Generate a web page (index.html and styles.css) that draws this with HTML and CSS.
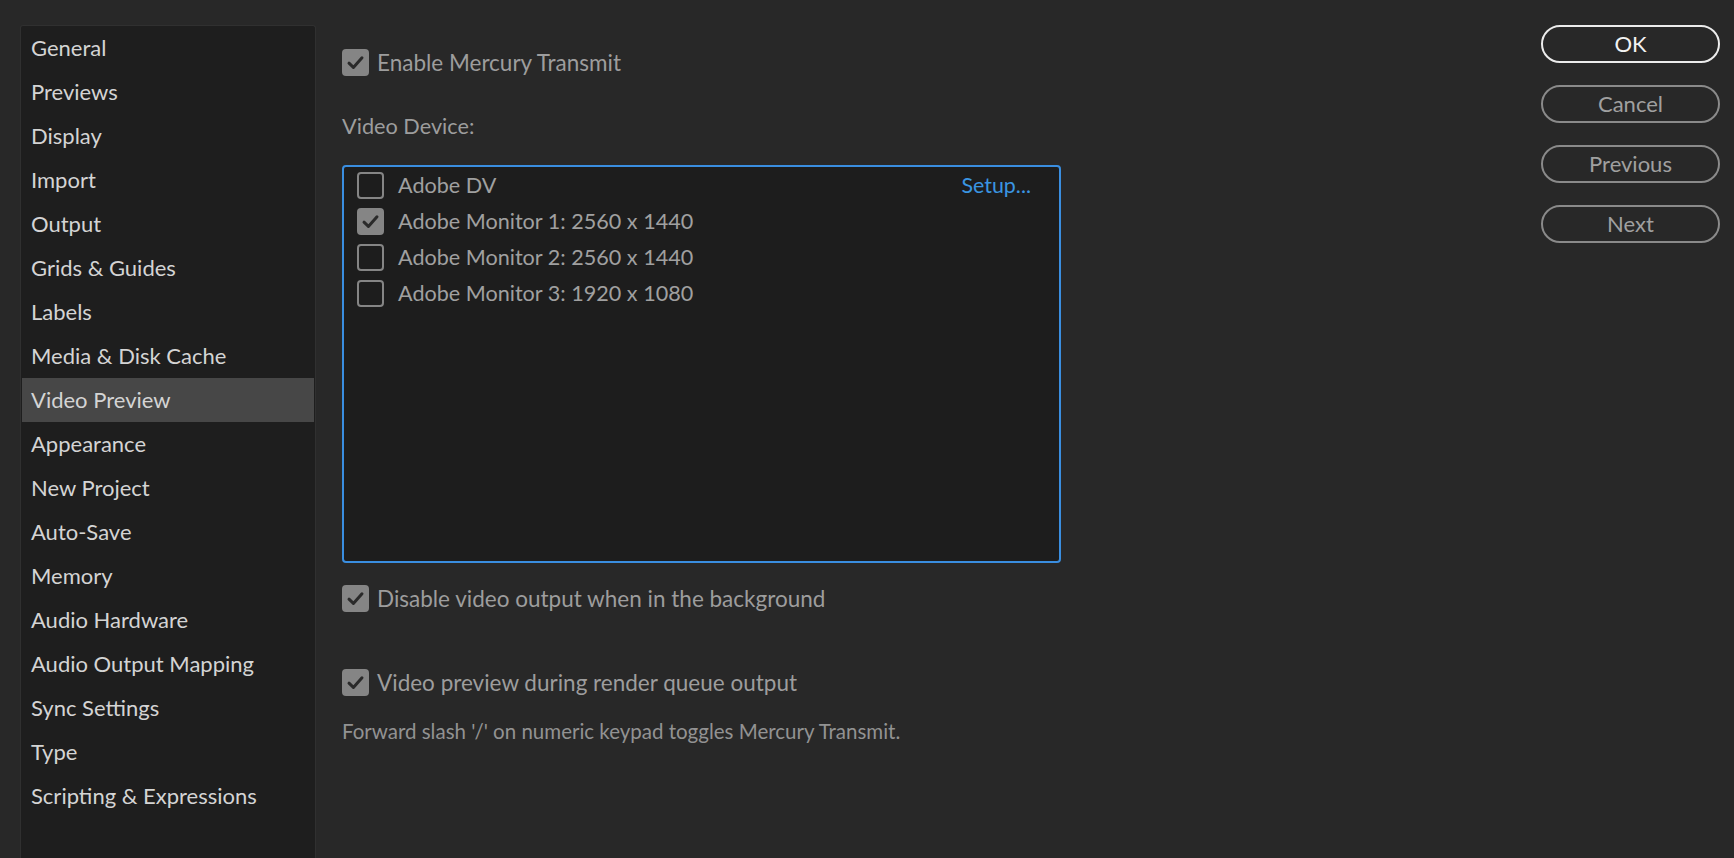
FILE: index.html
```html
<!DOCTYPE html>
<html>
<head>
<meta charset="utf-8">
<link rel="stylesheet" href="styles.css">
</head>
<body>
<div class="dialog">
  <nav class="sidebar">
    <ul class="nav-list">
      <li class="nav-item">General</li>
      <li class="nav-item">Previews</li>
      <li class="nav-item">Display</li>
      <li class="nav-item">Import</li>
      <li class="nav-item">Output</li>
      <li class="nav-item">Grids &amp; Guides</li>
      <li class="nav-item">Labels</li>
      <li class="nav-item">Media &amp; Disk Cache</li>
      <li class="nav-item selected">Video Preview</li>
      <li class="nav-item">Appearance</li>
      <li class="nav-item">New Project</li>
      <li class="nav-item">Auto-Save</li>
      <li class="nav-item">Memory</li>
      <li class="nav-item">Audio Hardware</li>
      <li class="nav-item">Audio Output Mapping</li>
      <li class="nav-item">Sync Settings</li>
      <li class="nav-item">Type</li>
      <li class="nav-item">Scripting &amp; Expressions</li>
    </ul>
  </nav>

  <main class="content">
    <label class="check-row first">
      <span class="box checked"><svg viewBox="0 0 27 27"><path d="M7 14.2 L11.4 18.4 L20 8.8"/></svg></span>
      <span class="check-label">Enable Mercury Transmit</span>
    </label>

    <div class="section-label">Video Device:</div>

    <div class="device-list">
      <div class="device-row">
        <span class="box"></span>
        <span class="device-name">Adobe DV</span>
        <span class="setup">Setup...</span>
      </div>
      <div class="device-row">
        <span class="box checked"><svg viewBox="0 0 27 27"><path d="M7 14.2 L11.4 18.4 L20 8.8"/></svg></span>
        <span class="device-name">Adobe Monitor 1: 2560 x 1440</span>
      </div>
      <div class="device-row">
        <span class="box"></span>
        <span class="device-name">Adobe Monitor 2: 2560 x 1440</span>
      </div>
      <div class="device-row">
        <span class="box"></span>
        <span class="device-name">Adobe Monitor 3: 1920 x 1080</span>
      </div>
    </div>

    <label class="check-row disable-row">
      <span class="box checked"><svg viewBox="0 0 27 27"><path d="M7 14.2 L11.4 18.4 L20 8.8"/></svg></span>
      <span class="check-label">Disable video output when in the background</span>
    </label>

    <label class="check-row render-row">
      <span class="box checked"><svg viewBox="0 0 27 27"><path d="M7 14.2 L11.4 18.4 L20 8.8"/></svg></span>
      <span class="check-label">Video preview during render queue output</span>
    </label>

    <p class="note">Forward slash '/' on numeric keypad toggles Mercury Transmit.</p>
  </main>

  <aside class="buttons">
    <button class="btn primary">OK</button>
    <button class="btn">Cancel</button>
    <button class="btn">Previous</button>
    <button class="btn">Next</button>
  </aside>
</div>
</body>
</html>
```

FILE: styles.css
```css
* { box-sizing: border-box; }

html, body {
  margin: 0;
  padding: 0;
  height: 100%;
  background: #282828;
  overflow: hidden;
}

body {
  font-family: "Lato", "Open Sans", sans-serif;
}

.dialog {
  display: flex;
  height: 858px;
  padding: 25px 14px 0 20px;
}

.sidebar {
  width: 296px;
  flex: none;
  background: #1e1e1e;
  border: 1px solid #303030;
  border-bottom: none;
  border-radius: 3px 3px 0 0;
  padding: 0 1px;
}

.nav-list {
  list-style: none;
  margin: 0;
  padding: 0;
}

.nav-item {
  height: 44px;
  line-height: 44px;
  padding-left: 9px;
  font-size: 22px;
  color: #d4d4d4;
  white-space: nowrap;
}

.nav-item.selected {
  background: #474747;
}

.content {
  flex: 1;
  padding-left: 26px;
  display: flex;
  flex-direction: column;
  align-items: flex-start;
}

.check-row {
  display: flex;
  align-items: center;
  height: 28px;
  gap: 8px;
}

.check-row.first { margin-top: 23px; }
.check-row.disable-row { margin-top: 21px; }
.check-row.render-row { margin-top: 56px; }

.check-label {
  font-size: 22.5px;
  color: #9d9d9d;
  white-space: nowrap;
}

.box {
  width: 27px;
  height: 27px;
  flex: none;
  border: 2.5px solid #858585;
  border-radius: 4px;
  display: inline-flex;
  align-items: center;
  justify-content: center;
}

.box.checked {
  background: #858585;
  border: none;
}

.box svg {
  width: 27px;
  height: 27px;
  display: block;
}

.box svg path {
  fill: none;
  stroke: #2a2a2a;
  stroke-width: 3;
  stroke-linecap: round;
  stroke-linejoin: round;
}

.section-label {
  margin-top: 35px;
  height: 30px;
  line-height: 30px;
  font-size: 21.7px;
  color: #9d9d9d;
}

.device-list {
  margin-top: 24px;
  width: 719px;
  height: 398px;
  background: #1d1d1d;
  border: 2px solid #3a8ee0;
  border-radius: 4px;
  padding: 0 28px 0 13px;
}

.device-row {
  display: flex;
  align-items: center;
  height: 36px;
  gap: 14px;
}

.device-name {
  font-size: 21.6px;
  color: #a0a0a0;
  white-space: nowrap;
}

.setup {
  margin-left: auto;
  font-size: 21.4px;
  color: #3a95e2;
}

.note {
  margin: 21px 0 0;
  font-size: 20.5px;
  color: #929292;
  line-height: 28px;
}

.buttons {
  width: 179px;
  flex: none;
  display: flex;
  flex-direction: column;
  gap: 22px;
  margin-left: auto;
}

.btn {
  height: 38px;
  width: 179px;
  border-radius: 19px;
  border: 2px solid #8a8a8a;
  background: transparent;
  color: #a0a0a0;
  font-family: "Lato", "Open Sans", sans-serif;
  font-size: 22px;
  padding: 0;
  line-height: 34px;
}

.btn.primary {
  border-color: #ececec;
  color: #f2f2f2;
}
```
